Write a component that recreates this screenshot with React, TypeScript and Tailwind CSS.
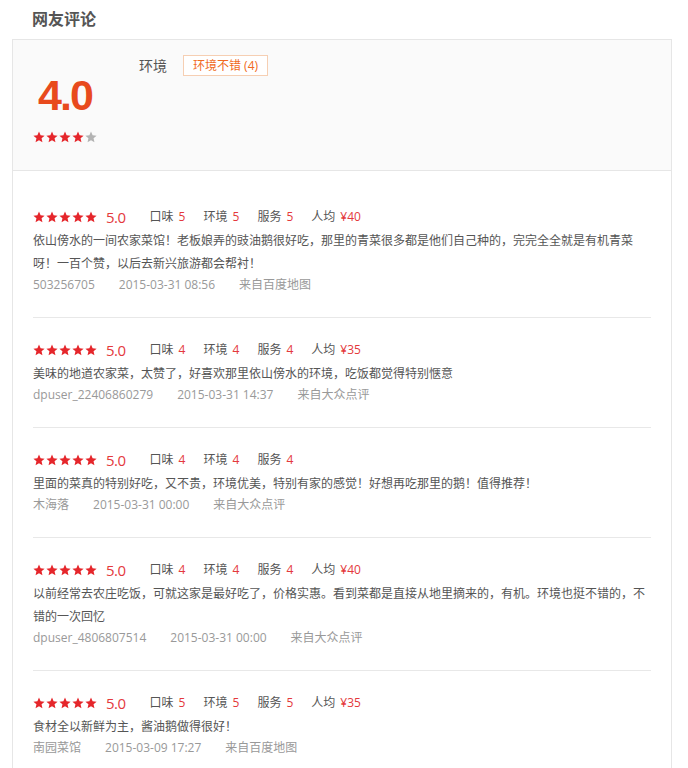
const reviews = [
  {
    score: '5.0',
    taste: 5,
    env: 5,
    service: 5,
    price: '¥40',
    text: '依山傍水的一间农家菜馆！老板娘弄的豉油鹅很好吃，那里的青菜很多都是他们自己种的，完完全全就是有机青菜呀！一百个赞，以后去新兴旅游都会帮衬！',
    user: '503256705',
    time: '2015-03-31 08:56',
    source: '来自百度地图',
  },
  {
    score: '5.0',
    taste: 4,
    env: 4,
    service: 4,
    price: '¥35',
    text: '美味的地道农家菜，太赞了，好喜欢那里依山傍水的环境，吃饭都觉得特别惬意',
    user: 'dpuser_22406860279',
    time: '2015-03-31 14:37',
    source: '来自大众点评',
  },
  {
    score: '5.0',
    taste: 4,
    env: 4,
    service: 4,
    price: '',
    text: '里面的菜真的特别好吃，又不贵，环境优美，特别有家的感觉！好想再吃那里的鹅！值得推荐！',
    user: '木海落',
    time: '2015-03-31 00:00',
    source: '来自大众点评',
  },
  {
    score: '5.0',
    taste: 4,
    env: 4,
    service: 4,
    price: '¥40',
    text: '以前经常去农庄吃饭，可就这家是最好吃了，价格实惠。看到菜都是直接从地里摘来的，有机。环境也挺不错的，不错的一次回忆',
    user: 'dpuser_4806807514',
    time: '2015-03-31 00:00',
    source: '来自大众点评',
  },
  {
    score: '5.0',
    taste: 5,
    env: 5,
    service: 5,
    price: '¥35',
    text: '食材全以新鲜为主，酱油鹅做得很好！',
    user: '南园菜馆',
    time: '2015-03-09 17:27',
    source: '来自百度地图',
  },
];

function Star({ on }: { on: boolean }) {
  return (
    <svg width="12" height="12" viewBox="0 0 24 24" className="block">
      <path
        d="M12 1.2l3.2 7.4 8 .7-6.1 5.3 1.8 7.9L12 18.3l-6.9 4.2 1.8-7.9L.8 9.3l8-.7z"
        fill={on ? '#e5262b' : '#b3b3b3'}
      />
    </svg>
  );
}

function Stars({ count }: { count: number }) {
  return (
    <div className="flex gap-px">
      {[0, 1, 2, 3, 4].map((i) => (
        <Star key={i} on={i < count} />
      ))}
    </div>
  );
}

function Score({ label, value }: { label: string; value: string | number }) {
  return (
    <span className="text-[12px] text-[#555]">
      {label}
      <span className="ml-[5px] text-[#e4393c]">{value}</span>
    </span>
  );
}

export default function App() {
  return (
    <div
      className="w-[688px] h-[768px] overflow-hidden bg-white"
      style={{ fontFamily: '"Open Sans", "Noto Sans CJK SC", sans-serif' }}
    >
      {/* 标题 */}
      <h2 className="h-[39px] pl-8 text-[16px] leading-[39px] font-bold text-[#555]">网友评论</h2>

      <div className="ml-3 w-[660px] border-x border-[#e6e6e6]">
        {/* 总评分 */}
        <div className="flex h-[132px] gap-[42px] border-y border-[#e6e6e6] bg-[#fafafa] px-5">
          <div className="flex w-[64px] flex-col items-center pt-[34px]">
            <div
              className="text-[43px] leading-[43px] font-bold tracking-[-2px] text-[#e84a1d]"
              style={{ fontFamily: '"Liberation Sans", Arial, sans-serif' }}
            >
              4.0
            </div>
            <div className="mt-[14px]">
              <Stars count={4} />
            </div>
          </div>
          <div className="flex h-fit items-center gap-4 pt-[15px]">
            <span className="text-[14px] text-[#555]">环境</span>
            <span className="border border-[#f6cfb3] bg-white px-[9px] text-[12px] leading-[19px] text-[#f06a22]">
              环境不错 (4)
            </span>
          </div>
        </div>

        {/* 评论列表 */}
        <div className="px-5 pt-[14px]">
          {reviews.map((r, i) => (
            <div
              key={i}
              className={`pt-[20px] pb-[22px] ${i < reviews.length - 1 ? 'border-b border-[#e8e8e8]' : ''}`}
            >
              <div className="flex h-[24px] items-center">
                <Stars count={5} />
                <span className="ml-[9px] text-[15px] tracking-[-0.5px] text-[#e4393c]">{r.score}</span>
                <div className="ml-[24px] flex gap-[18px]">
                  <Score label="口味" value={r.taste} />
                  <Score label="环境" value={r.env} />
                  <Score label="服务" value={r.service} />
                  {r.price && <Score label="人均" value={r.price} />}
                </div>
              </div>
              <p className="text-[12px] leading-[23px] text-[#555]">{r.text}</p>
              <div className="flex gap-6 text-[12px] leading-[20px] text-[#999]">
                <span>{r.user}</span>
                <span>{r.time}</span>
                <span>{r.source}</span>
              </div>
            </div>
          ))}
        </div>
      </div>
    </div>
  );
}
